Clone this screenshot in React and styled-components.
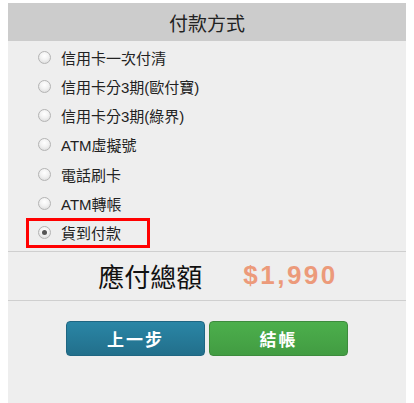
import styled, { createGlobalStyle } from "styled-components";

const GlobalStyle = createGlobalStyle`
  body {
    margin: 3px 8px 0;
    background: #fff;
    font-family: "Liberation Sans", "Noto Sans CJK TC", sans-serif;
  }
`;

const Panel = styled.div`
  background: #eeeeee;
  min-height: 400px;
  display: flex;
  flex-direction: column;
`;

const Header = styled.div`
  height: 38px;
  background: #cccccc;
  display: flex;
  align-items: center;
  justify-content: center;
  font-size: 19px;
  color: #222;
`;

const OptionList = styled.div`
  display: flex;
  flex-direction: column;
  gap: 5.33px;
  padding: 4px 0 0 21px;
`;

const Option = styled.label`
  display: flex;
  align-items: center;
  gap: 10px;
  width: fit-content;
  height: 24px;
  padding: 0 26px 0 9px;
  font-size: 15px;
  color: #222;
  outline: ${(p) => (p.$active ? "3px solid #ff0000" : "none")};
`;

const Radio = styled.span`
  box-sizing: border-box;
  width: 13px;
  height: 13px;
  border-radius: 50%;
  border: 1px solid #b4b4b4;
  background: radial-gradient(circle at 50% 35%, #ffffff 0%, #f2f2f2 45%, #d6d6d6 100%);
  display: flex;
  align-items: center;
  justify-content: center;

  &::after {
    content: "";
    width: 5px;
    height: 5px;
    border-radius: 50%;
    background: #555;
    display: ${(p) => (p.$checked ? "block" : "none")};
  }
`;

const TotalRow = styled.div`
  margin-top: 6px;
  height: 48px;
  border-top: 1px solid #cfcfcf;
  border-bottom: 1px solid #cfcfcf;
  display: flex;
  align-items: center;
  justify-content: center;
  gap: 41px;
  padding-left: 22px;
`;

const TotalLabel = styled.span`
  font-size: 26px;
  color: #111;
`;

const Amount = styled.span`
  font-family: "Liberation Sans", Arial, sans-serif;
  font-weight: bold;
  font-size: 26px;
  letter-spacing: 2.5px;
  color: #ec9a7a;
`;

const ButtonRow = styled.div`
  display: flex;
  justify-content: center;
  gap: 4px;
  padding-top: 20px;
`;

const Button = styled.button`
  width: 139px;
  height: 35px;
  border-radius: 4px;
  border: 1px solid ${(p) => (p.$variant === "blue" ? "#1f6682" : "#3d8b3d")};
  background: ${(p) =>
    p.$variant === "blue"
      ? "linear-gradient(#2a86a6, #226f8b)"
      : "linear-gradient(#4caf4c, #429c42)"};
  color: #fff;
  font-family: "Liberation Sans", "Noto Sans CJK TC", sans-serif;
  font-weight: bold;
  font-size: 17px;
  letter-spacing: 2px;
  cursor: pointer;
`;

const options = [
  "信用卡一次付清",
  "信用卡分3期(歐付寶)",
  "信用卡分3期(綠界)",
  "ATM虛擬號",
  "電話刷卡",
  "ATM轉帳",
  "貨到付款",
];

export default function App() {
  const selected = 6;
  return (
    <>
      <GlobalStyle />
      <Panel>
        <Header>付款方式</Header>
        <OptionList>
          {options.map((o, i) => (
            <Option key={o} $active={i === selected}>
              <Radio $checked={i === selected} />
              {o}
            </Option>
          ))}
        </OptionList>
        <TotalRow>
          <TotalLabel>應付總額</TotalLabel>
          <Amount>$1,990</Amount>
        </TotalRow>
        <ButtonRow>
          <Button $variant="blue">上一步</Button>
          <Button $variant="green">結帳</Button>
        </ButtonRow>
      </Panel>
    </>
  );
}
